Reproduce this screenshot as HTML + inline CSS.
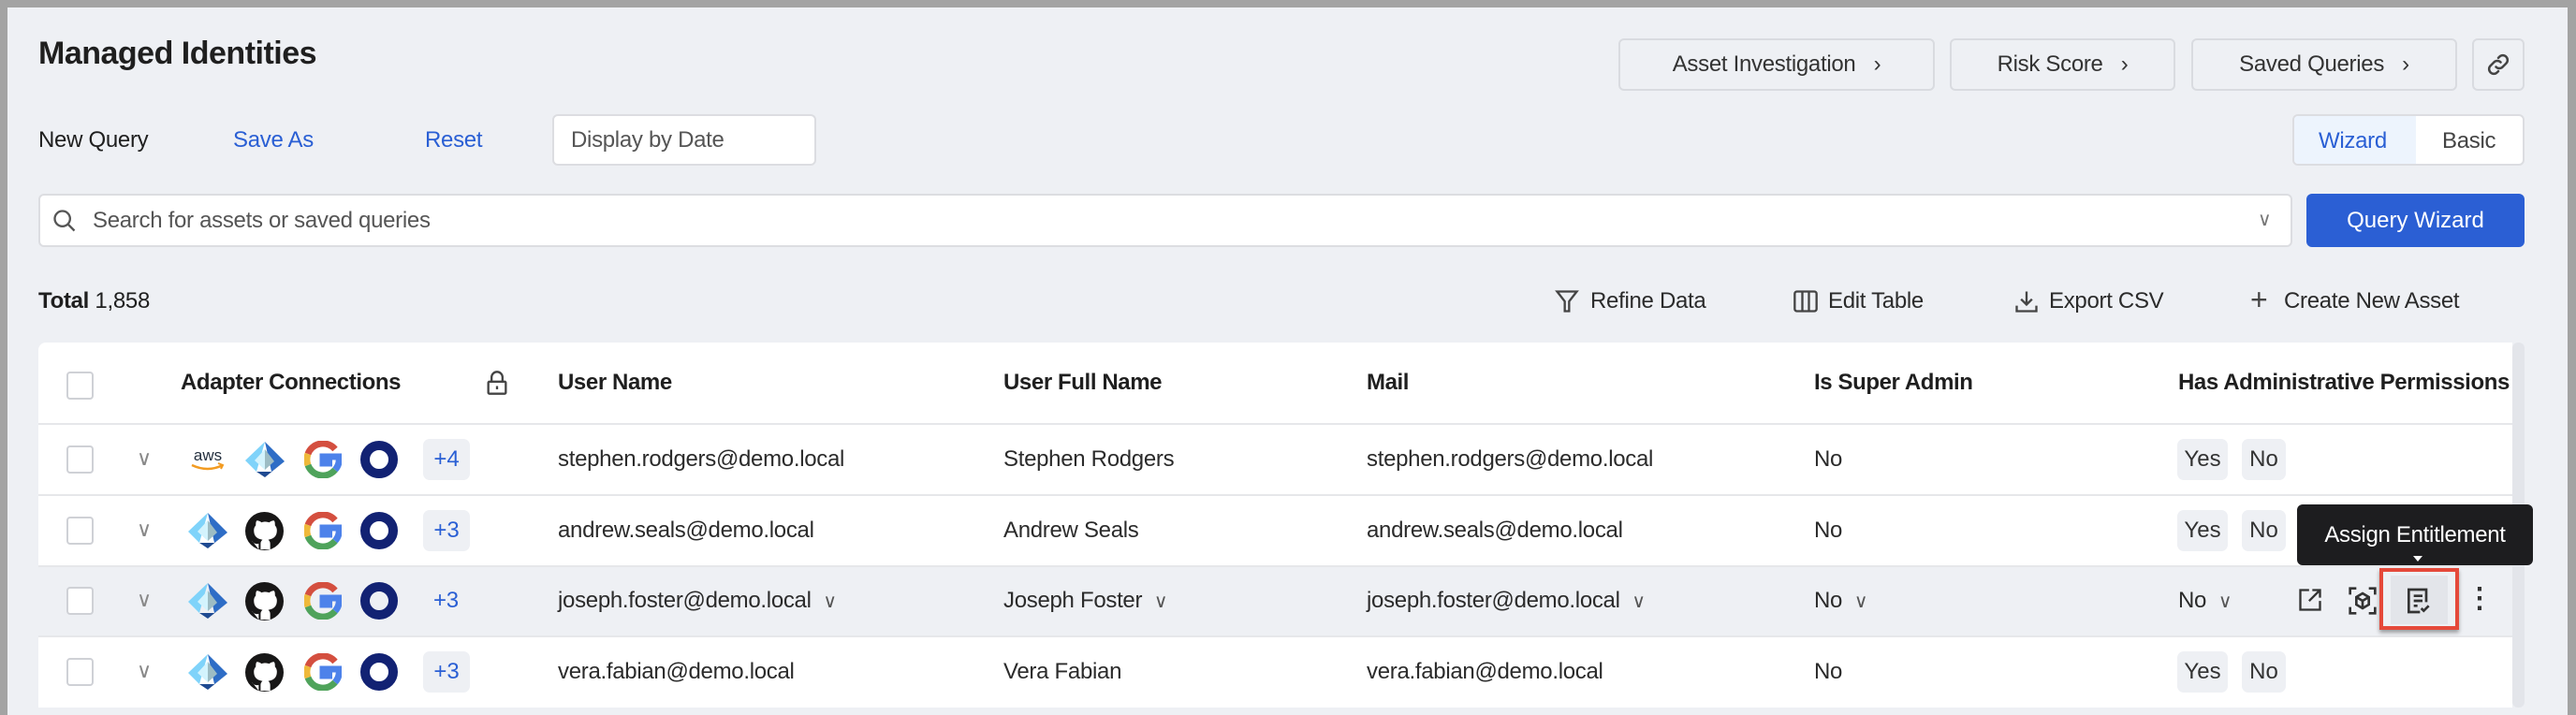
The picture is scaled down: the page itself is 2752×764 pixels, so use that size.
<!DOCTYPE html>
<html><head><meta charset="utf-8"><style>
*{box-sizing:border-box;margin:0;padding:0}
body{width:2752px;height:764px;background:#a3a3a3;font-family:"Liberation Sans",Arial,sans-serif;color:#1f1f1f;position:relative;overflow:hidden}
.page{position:absolute;left:8px;top:8px;width:2735px;height:756px;background:#eef0f4}
.a{position:absolute;white-space:nowrap}
.btn{position:absolute;background:#eef0f4;border:2px solid #d9dbe0;border-radius:6px;font-size:24px;color:#333;display:flex;align-items:center;justify-content:center;letter-spacing:-0.3px}
.t{font-size:24px;color:#2b2b2b;letter-spacing:-0.3px}
.h{font-size:24px;font-weight:bold;color:#1f1f1f;letter-spacing:-0.4px}
.blue{color:#2a5fd4}
.cb{position:absolute;left:71px;width:29px;height:30px;border:2px solid #cfd1d6;border-radius:4px;background:#fff}
.chip{position:absolute;background:#eef0f4;border-radius:7px;font-size:24px;display:flex;align-items:center;justify-content:center;color:#333}
.row{position:absolute;left:41px;width:2643px;border-top:2px solid #e6e7ea}
</style></head><body>
<div class="page"></div>
<div class="a" style="left:41px;top:38px;font-size:34px;font-weight:bold;letter-spacing:-0.5px">Managed Identities</div>

<div class="btn" style="left:1729px;top:41px;width:338px;height:56px">Asset Investigation&nbsp;&nbsp;&nbsp;›</div>
<div class="btn" style="left:2083px;top:41px;width:241px;height:56px">Risk Score&nbsp;&nbsp;&nbsp;›</div>
<div class="btn" style="left:2341px;top:41px;width:284px;height:56px">Saved Queries&nbsp;&nbsp;&nbsp;›</div>
<div class="btn" style="left:2641px;top:41px;width:56px;height:56px"><svg width="30" height="30" viewBox="0 0 24 24" fill="none" stroke="#444" stroke-width="2" stroke-linecap="round"><path d="M10 14a4 4 0 0 0 5.7 0l3-3a4 4 0 0 0-5.7-5.7l-1 1"/><path d="M14 10a4 4 0 0 0-5.7 0l-3 3a4 4 0 0 0 5.7 5.7l1-1"/></svg></div>

<div class="a t" style="left:41px;top:136px;color:#1f1f1f">New Query</div>
<div class="a t blue" style="left:249px;top:136px">Save As</div>
<div class="a t blue" style="left:454px;top:136px">Reset</div>
<div class="a" style="left:590px;top:122px;width:282px;height:55px;background:#fff;border:2px solid #dcdde1;border-radius:6px"></div>
<div class="a t" style="left:610px;top:136px;color:#555">Display by Date</div>

<div class="a" style="left:2449px;top:122px;width:248px;height:55px;border:2px solid #dcdde1;border-radius:6px;background:#fff;overflow:hidden">
<div style="position:absolute;left:0;top:0;width:130px;height:100%;background:#edf4fd"></div>
<div class="t blue" style="position:absolute;left:26px;top:13px">Wizard</div>
<div class="t" style="position:absolute;left:158px;top:13px;color:#444">Basic</div></div>

<div class="a" style="left:41px;top:207px;width:2408px;height:57px;background:#fff;border:2px solid #dcdde1;border-radius:6px"></div>
<svg class="a" style="left:55px;top:221px" width="28" height="30" viewBox="0 0 24 24" fill="none" stroke="#555" stroke-width="2"><circle cx="10" cy="10" r="7"/><path d="M15 15l6 6"/></svg>
<div class="a t" style="left:99px;top:222px;color:#555">Search for assets or saved queries</div>
<div class="a" style="left:2412px;top:222px;font-size:20px;color:#777">∨</div>
<div class="a" style="left:2464px;top:207px;width:233px;height:57px;background:#2b5fd4;border-radius:6px;color:#fff;font-size:24px;display:flex;align-items:center;justify-content:center">Query Wizard</div>

<div class="a t" style="left:41px;top:308px;color:#1f1f1f"><b>Total</b> 1,858</div>
<svg class="a" style="left:1660px;top:307px" width="28" height="30" viewBox="0 0 24 24" fill="none" stroke="#444" stroke-width="2"><path d="M3 3h18l-7 9v9h-4v-9z"/></svg>
<div class="a t" style="left:1699px;top:308px">Refine Data</div>
<svg class="a" style="left:1914px;top:308px" width="30" height="28" viewBox="0 0 24 24" fill="none" stroke="#444" stroke-width="2"><rect x="2" y="3" width="20" height="18" rx="2"/><path d="M9 3v18M15 3v18"/></svg>
<div class="a t" style="left:1953px;top:308px">Edit Table</div>
<svg class="a" style="left:2151px;top:307px" width="28" height="30" viewBox="0 0 24 24" fill="none" stroke="#444" stroke-width="2"><path d="M12 3v12M7 10l5 5 5-5M3 16v5h18v-5"/></svg>
<div class="a t" style="left:2189px;top:308px">Export CSV</div>
<div class="a" style="left:2404px;top:302px;font-size:32px;color:#444">+</div>
<div class="a t" style="left:2440px;top:308px">Create New Asset</div>

<!-- table -->
<div class="a" style="left:41px;top:366px;width:2643px;height:390px;background:#fff;border-radius:8px 0 0 0"></div>
<div class="a" style="left:2684px;top:366px;width:13px;height:390px;background:#e3e5ea;border-radius:6px"></div>
<div class="row" style="top:604px;height:75px;background:#eef0f4;border-top:2px solid #e6e7ea"></div>
<div class="row" style="top:452px"></div>
<div class="row" style="top:528px"></div>
<div class="row" style="top:679px"></div>

<div class="cb" style="top:397px"></div>
<div class="a h" style="left:193px;top:395px">Adapter Connections</div>
<svg class="a" style="left:519px;top:395px" width="24" height="28" viewBox="0 0 20 24" fill="none" stroke="#444" stroke-width="2"><path d="M5 11V7a5 5 0 0 1 10 0v4"/><rect x="2" y="11" width="16" height="11" rx="1"/><path d="M10 15v3"/></svg>
<div class="a h" style="left:596px;top:395px">User Name</div>
<div class="a h" style="left:1072px;top:395px">User Full Name</div>
<div class="a h" style="left:1460px;top:395px">Mail</div>
<div class="a h" style="left:1938px;top:395px">Is Super Admin</div>
<div class="a h" style="left:2327px;top:395px;width:357px;overflow:hidden">Has Administrative Permissions</div>

<svg width="0" height="0" style="position:absolute"><defs>
<symbol id="az" viewBox="0 0 44 40"><path d="M22 1L1 21l12 12z" fill="#7fd3fa"/><path d="M22 1l21 21-14 11z" fill="#2e6dc6"/><path d="M22 9L11 21l11 10z" fill="#d3f3fd"/><path d="M22 9l10 13-10 9z" fill="#9dbcc4"/><path d="M13 33l9 6 21-17-14 11z" fill="#1f4a91"/></symbol>
<symbol id="gh" viewBox="0 0 40 40"><circle cx="20" cy="20" r="20" fill="#181717"/><path d="M14 39v-6c-4 1-6-1-7-3M26 39v-6c0-2-1-3-2-4 5-1 9-3 9-10 0-2-1-4-2-5 0-2 0-4-1-5-2 0-4 1-5 2-3-1-6-1-8 0-1-1-3-2-5-2-1 1-1 3-1 5-1 1-2 3-2 5 0 7 4 9 9 10-1 1-2 2-2 4v6z" fill="#fff"/></symbol>
<symbol id="gg" viewBox="0 0 40 40"><path d="M33 9A17 17 0 0 0 4 14" stroke="#d44f3f" stroke-width="7" fill="none"/><path d="M4 14a17 17 0 0 0 0 12" stroke="#efb93a" stroke-width="7" fill="none"/><path d="M4 26a17 17 0 0 0 29 5" stroke="#4fa35b" stroke-width="7" fill="none"/><path d="M33 31a17 17 0 0 0 4-14H20v7h10" stroke="#4d82ea" stroke-width="7" fill="none"/></symbol>
<symbol id="ok" viewBox="0 0 40 40"><circle cx="20" cy="20" r="15" stroke="#122273" stroke-width="10" fill="none"/></symbol>
<symbol id="aws" viewBox="0 0 40 40"><text x="20" y="21" text-anchor="middle" font-family="Liberation Sans" font-size="17" fill="#232f3e">aws</text><path d="M3 26q17 8 33 0" stroke="#f29b21" stroke-width="2.5" fill="none"/><path d="M31 24l5 2-2 4" stroke="#f29b21" stroke-width="2" fill="none"/></symbol>
</defs></svg>

<!-- row1 -->
<div class="cb" style="top:476px"></div>
<div class="a" style="left:146px;top:477px;font-size:22px;color:#888">∨</div>
<svg class="a" style="left:202px;top:471px" width="40" height="40"><use href="#aws"/></svg>
<svg class="a" style="left:261px;top:471px" width="44" height="40"><use href="#az"/></svg>
<svg class="a" style="left:325px;top:471px" width="40" height="40"><use href="#gg"/></svg>
<svg class="a" style="left:385px;top:471px" width="40" height="40"><use href="#ok"/></svg>
<div class="chip blue" style="left:452px;top:469px;width:50px;height:44px;color:#2a5fd4">+4</div>
<div class="a t" style="left:596px;top:477px">stephen.rodgers@demo.local</div>
<div class="a t" style="left:1072px;top:477px">Stephen Rodgers</div>
<div class="a t" style="left:1460px;top:477px">stephen.rodgers@demo.local</div>
<div class="a t" style="left:1938px;top:477px">No</div>
<div class="chip" style="left:2326px;top:469px;width:54px;height:44px">Yes</div>
<div class="chip" style="left:2395px;top:469px;width:47px;height:44px">No</div>

<!-- row2 -->
<div class="cb" style="top:552px"></div>
<div class="a" style="left:146px;top:553px;font-size:22px;color:#888">∨</div>
<svg class="a" style="left:200px;top:547px" width="44" height="40"><use href="#az"/></svg>
<svg class="a" style="left:262px;top:547px" width="41" height="41"><use href="#gh"/></svg>
<svg class="a" style="left:325px;top:547px" width="40" height="40"><use href="#gg"/></svg>
<svg class="a" style="left:385px;top:547px" width="40" height="40"><use href="#ok"/></svg>
<div class="chip blue" style="left:452px;top:545px;width:50px;height:44px;color:#2a5fd4">+3</div>
<div class="a t" style="left:596px;top:553px">andrew.seals@demo.local</div>
<div class="a t" style="left:1072px;top:553px">Andrew Seals</div>
<div class="a t" style="left:1460px;top:553px">andrew.seals@demo.local</div>
<div class="a t" style="left:1938px;top:553px">No</div>
<div class="chip" style="left:2326px;top:545px;width:54px;height:44px">Yes</div>
<div class="chip" style="left:2395px;top:545px;width:47px;height:44px">No</div>

<!-- row3 -->
<div class="cb" style="top:627px"></div>
<div class="a" style="left:146px;top:628px;font-size:22px;color:#888">∨</div>
<svg class="a" style="left:200px;top:622px" width="44" height="40"><use href="#az"/></svg>
<svg class="a" style="left:262px;top:622px" width="41" height="41"><use href="#gh"/></svg>
<svg class="a" style="left:325px;top:622px" width="40" height="40"><use href="#gg"/></svg>
<svg class="a" style="left:385px;top:622px" width="40" height="40"><use href="#ok"/></svg>
<div class="a t" style="left:463px;top:628px;color:#2a5fd4">+3</div>
<div class="a t" style="left:596px;top:628px">joseph.foster@demo.local&nbsp;&nbsp;<span style="font-size:20px;color:#555">∨</span></div>
<div class="a t" style="left:1072px;top:628px">Joseph Foster&nbsp;&nbsp;<span style="font-size:20px;color:#555">∨</span></div>
<div class="a t" style="left:1460px;top:628px">joseph.foster@demo.local&nbsp;&nbsp;<span style="font-size:20px;color:#555">∨</span></div>
<div class="a t" style="left:1938px;top:628px">No&nbsp;&nbsp;<span style="font-size:20px;color:#555">∨</span></div>
<div class="a t" style="left:2327px;top:628px">No&nbsp;&nbsp;<span style="font-size:20px;color:#555">∨</span></div>
<svg class="a" style="left:2454px;top:627px" width="28" height="28" viewBox="0 0 24 24" fill="none" stroke="#333" stroke-width="2"><path d="M11 3H3v18h18v-8M14 3h7v7M21 3L11 13"/></svg>
<svg class="a" style="left:2508px;top:626px" width="32" height="32" viewBox="0 0 24 24" fill="none" stroke="#333" stroke-width="2"><path d="M2 7V2h5M17 2h5v5M22 17v5h-5M7 22H2v-5"/><path d="M12 6l5 3v6l-5 3-5-3V9zM7 9l5 3 5-3M12 12v6"/></svg>
<div class="a" style="left:2542px;top:607px;width:85px;height:66px;border:4px solid #e5493a;box-shadow:0 3px 4px rgba(0,0,0,.35)"><div style="position:absolute;left:8px;top:4px;width:61px;height:52px;background:#e3e5ea"></div></div>
<svg class="a" style="left:2568px;top:626px" width="32" height="32" viewBox="0 0 24 24" fill="none" stroke="#333" stroke-width="2"><path d="M13 21H4V3h14v10M8 8h7M8 12h7M8 16h3M14 18l2 2 4-4"/></svg>
<div class="a" style="left:2634px;top:622px;font-size:30px;font-weight:bold;color:#333">⋮</div>

<!-- tooltip -->
<div class="a" style="left:2454px;top:539px;width:252px;height:65px;background:#1d1d1f;border-radius:6px;color:#fff;font-size:24px;letter-spacing:-0.3px;display:flex;align-items:center;justify-content:center">Assign Entitlement</div>
<div class="a" style="left:2578px;top:594px;width:0;height:0;border-left:5px solid transparent;border-right:5px solid transparent;border-top:6px solid #fff"></div>

<!-- row4 -->
<div class="cb" style="top:703px"></div>
<div class="a" style="left:146px;top:704px;font-size:22px;color:#888">∨</div>
<svg class="a" style="left:200px;top:698px" width="44" height="40"><use href="#az"/></svg>
<svg class="a" style="left:262px;top:698px" width="41" height="41"><use href="#gh"/></svg>
<svg class="a" style="left:325px;top:698px" width="40" height="40"><use href="#gg"/></svg>
<svg class="a" style="left:385px;top:698px" width="40" height="40"><use href="#ok"/></svg>
<div class="chip blue" style="left:452px;top:696px;width:50px;height:44px;color:#2a5fd4">+3</div>
<div class="a t" style="left:596px;top:704px">vera.fabian@demo.local</div>
<div class="a t" style="left:1072px;top:704px">Vera Fabian</div>
<div class="a t" style="left:1460px;top:704px">vera.fabian@demo.local</div>
<div class="a t" style="left:1938px;top:704px">No</div>
<div class="chip" style="left:2326px;top:696px;width:54px;height:44px">Yes</div>
<div class="chip" style="left:2395px;top:696px;width:47px;height:44px">No</div>
</body></html>
